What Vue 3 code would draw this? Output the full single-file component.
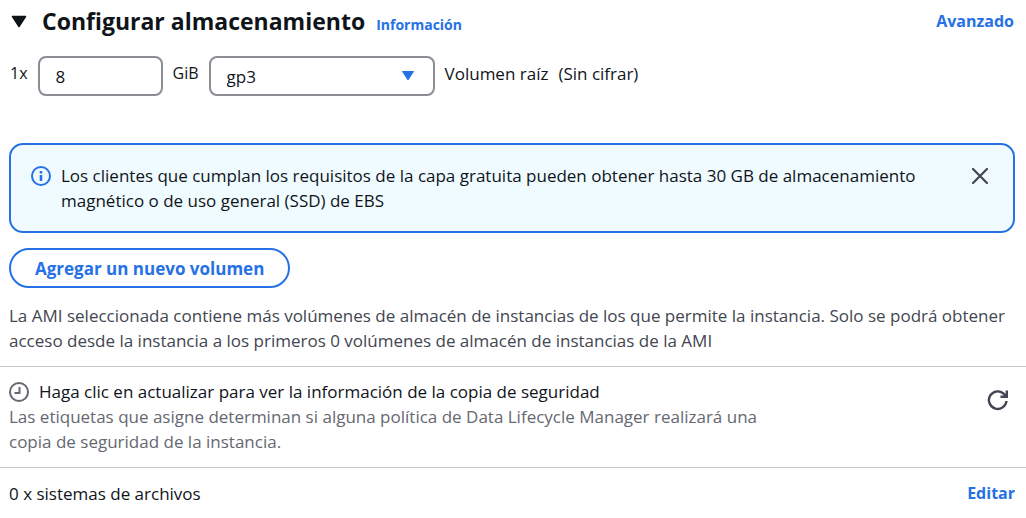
<script setup>
import { ref } from 'vue'

const open = ref(true)
const size = ref('8')
const type = ref('gp3')
const notice = ref(true)
</script>

<template>
  <section class="storage">
    <header class="head">
      <button class="toggle" type="button" aria-label="Configurar almacenamiento" :aria-expanded="open" @click="open = !open">
        <svg viewBox="0 0 16 13" width="16" height="13" aria-hidden="true">
          <path d="M1.5 1.5h13L8 11.5z" fill="#0f141a" stroke="#0f141a" stroke-width="1.5" stroke-linejoin="round" />
        </svg>
      </button>
      <h2>Configurar almacenamiento</h2>
      <a class="info" href="#informacion">Información</a>
      <a class="action" href="#avanzado">Avanzado</a>
    </header>

    <div class="volume">
      <label for="size">1x</label>
      <input id="size" v-model="size" class="field size" type="text" inputmode="numeric" />
      <label for="type">GiB</label>
      <div class="select">
        <select id="type" v-model="type" class="field">
          <option>gp2</option>
          <option>gp3</option>
          <option>io1</option>
        </select>
        <svg class="caret" viewBox="0 0 14 12" width="14" height="12" aria-hidden="true">
          <path d="M1.5 1.5h11L7 10z" fill="#2671e5" stroke="#2671e5" stroke-linejoin="round" />
        </svg>
      </div>
      <span>Volumen raíz</span>
      <span>(Sin cifrar)</span>
    </div>

    <div v-if="notice" class="notice" role="status">
      <svg class="icon" viewBox="0 0 20 20" width="20" height="20" fill="none" stroke="#2671e5" stroke-width="2" aria-hidden="true">
        <circle cx="10" cy="10" r="9" />
        <path d="M10 5v2.500M10 9v6" stroke-width="2.6" />
      </svg>
      <p>Los clientes que cumplan los requisitos de la capa gratuita pueden obtener hasta 30 GB de almacenamiento magnético o de uso general (SSD) de EBS</p>
      <button class="icon-button" type="button" aria-label="Cerrar" @click="notice = false">
        <svg viewBox="0 0 18 18" width="18" height="18" fill="none" stroke="#424650" stroke-width="2.2" stroke-linecap="round" aria-hidden="true">
          <path d="M2 2l14 14M16 2L2 16" />
        </svg>
      </button>
    </div>

    <button class="add" type="button">Agregar un nuevo volumen</button>

    <p class="limit">La AMI seleccionada contiene más volúmenes de almacén de instancias de los que permite la instancia. Solo se podrá obtener acceso desde la instancia a los primeros 0 volúmenes de almacén de instancias de la AMI</p>

    <div class="backup">
      <div class="backup-text">
        <p class="backup-title">
          <svg class="icon" viewBox="0 0 20 20" width="20" height="20" fill="none" stroke="#656871" stroke-width="2" aria-hidden="true">
            <circle cx="10" cy="10" r="9" />
            <path d="M10.500 5v6H5.500" />
          </svg>
          Haga clic en actualizar para ver la información de la copia de seguridad
        </p>
        <p class="hint">Las etiquetas que asigne determinan si alguna política de Data Lifecycle Manager realizará una copia de seguridad de la instancia.</p>
      </div>
      <button class="icon-button" type="button" aria-label="Actualizar">
        <svg viewBox="0 0 22 22" width="22" height="22" fill="none" stroke="#424650" stroke-width="2.4" aria-hidden="true">
          <path d="M19.500 12A8.800 8.800 0 1 1 17.500 5.500L19 7.500" />
          <path d="M19.800 1.500v6.300h-6.300" />
          <path d="M16.500 5l3 3V5z" fill="#424650" stroke="none" />
        </svg>
      </button>
    </div>

    <footer class="files">
      <span>0 x sistemas de archivos</span>
      <a class="action" href="#editar">Editar</a>
    </footer>
  </section>
</template>

<style>
body {
  margin: 0;
  background: #fff;
}
</style>

<style scoped>
.storage {
  font-family: "Open Sans", "Noto Sans", sans-serif;
  font-size: 17px;
  line-height: 25px;
  color: #0f141a;
}
p, h2 {
  margin: 0;
}
button {
  font: inherit;
  padding: 0;
  border: 0;
  background: none;
  cursor: pointer;
}
svg {
  display: block;
  flex: none;
}
a {
  color: #2671e5;
  font-weight: 700;
  text-decoration: none;
}
.head {
  display: flex;
  align-items: center;
  padding: 4px 12px 0 11px;
}
h2 {
  margin-left: 15px;
  font-size: 23px;
  line-height: 34px;
}
.info {
  margin: 6px 0 0 11px;
  font-size: 14px;
}
.action {
  font-size: 16px;
}
.head .action {
  margin-left: auto;
}
.volume {
  display: flex;
  align-items: flex-start;
  gap: 10px;
  margin: 18px 10px 47px;
}
.volume label,
.volume span {
  margin-top: 5px;
}
.volume label {
  font-size: 16px;
}
.field {
  box-sizing: border-box;
  height: 40px;
  padding: 0 16px;
  border: 2px solid #8c8c94;
  border-radius: 8px;
  background: #fff;
  color: inherit;
  font: inherit;
}
.size {
  width: 125px;
}
.select {
  position: relative;
}
select.field {
  display: block;
  width: 226px;
  appearance: none;
}
.caret {
  position: absolute;
  top: 14px;
  right: 20px;
  pointer-events: none;
}
.notice {
  display: flex;
  align-items: flex-start;
  gap: 10px;
  margin: 0 11px 15px 9px;
  padding: 18px 24px 18px 20px;
  border: 2px solid #2671e5;
  border-radius: 14px;
  background: #f0fbff;
}
.notice p {
  flex: 1;
  max-width: 880px;
}
.notice .icon {
  margin-top: 3px;
}
.notice .icon-button {
  margin: 4px 0 0 auto;
}
.add {
  box-sizing: border-box;
  height: 40px;
  margin-left: 9px;
  padding: 0 24px;
  border: 2px solid #2671e5;
  border-radius: 20px;
  color: #2671e5;
  font-weight: 700;
}
.limit {
  padding: 15px 9px 13px;
  color: #424650;
}
.backup {
  display: flex;
  align-items: flex-start;
  justify-content: space-between;
  padding: 12px 17px 13px 9px;
  border: solid #c6c6cd;
  border-width: 1px 0;
}
.backup-text {
  max-width: 780px;
}
.backup-title {
  display: flex;
  align-items: center;
  gap: 10px;
}
.hint {
  color: #656871;
}
.backup .icon-button {
  margin-top: 10px;
}
.files {
  display: flex;
  justify-content: space-between;
  padding: 13px 11px 12px 9px;
}
</style>
